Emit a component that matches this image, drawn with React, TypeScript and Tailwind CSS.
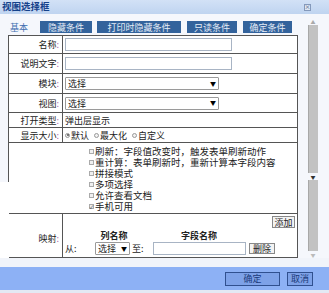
import { ReactNode } from 'react'

const FONT = "font-['Noto_Sans_CJK_SC',sans-serif]"

function Label({ children }: { children: ReactNode }) {
  return (
    <div className="w-[54px] shrink-0 border-r border-[#555] flex items-center justify-end pr-[3px]">
      {children}<span className="text-[#b070b0]">:</span>
    </div>
  )
}

function Row({ h, label, children }: { h: string; label: string; children?: ReactNode }) {
  return (
    <div className={`flex ${h} border-b border-r border-[#555]`}>
      <Label>{label}</Label>
      <div className="flex-1 flex items-center pl-[2px]">{children}</div>
    </div>
  )
}

function TextBox({ w }: { w: string }) {
  return <div className={`${w} h-[13px] border border-[#a8b4c4] bg-white`} />
}

function Select({ w }: { w: string }) {
  return (
    <div className={`${w} h-[13px] border border-[#9a9a9a] rounded-[1px] bg-white flex items-center justify-between px-[2px]`}>
      <span>选择</span>
      <span className="text-[6px] text-black">▼</span>
    </div>
  )
}

function Radio({ on, text }: { on?: boolean; text: string }) {
  return (
    <div className="flex items-center gap-[1px] mr-[5px]">
      <span className="w-[5px] h-[5px] rounded-full border border-[#999] bg-[#f2f2f2] flex items-center justify-center">
        {on && <span className="w-[2px] h-[2px] rounded-full bg-[#555]" />}
      </span>
      <span>{text}</span>
    </div>
  )
}

function Check({ on, text }: { on?: boolean; text: string }) {
  return (
    <div className="flex items-center h-[11px] gap-[1px] text-[9.5px] leading-[11px]">
      <span className="w-[5px] h-[5px] border border-[#aaa] bg-[#f0f0f0] flex items-center justify-center text-[5px] leading-none">
        {on ? '✓' : ''}
      </span>
      <span>{text}</span>
    </div>
  )
}

const TABS = [
  { t: '隐藏条件', w: 'w-[52px]', ml: 'ml-0' },
  { t: '打印时隐藏条件', w: 'w-[84px]', ml: 'ml-[5px]' },
  { t: '只读条件', w: 'w-[50px]', ml: 'ml-[6px]' },
  { t: '确定条件', w: 'w-[49px]', ml: 'ml-[6px]' },
]

export default function App() {
  return (
    <div className={`w-[329px] h-[293px] overflow-hidden flex flex-col bg-[#f5f7fc] text-[9px] leading-none text-[#222] ${FONT}`}>
      {/* title */}
      <div className="h-[14px] shrink-0 flex items-center justify-between pl-[2px] pr-[18px] bg-gradient-to-b from-[#d2e1f6] to-[#bfd4f0]">
        <span className="font-bold text-[#15428b] text-[9.5px]">视图选择框</span>
        <span className="w-[7px] h-[7px] border border-[#8499bb] bg-[#dde6f3] flex items-center justify-center text-[6px] text-[#3d5478]">×</span>
      </div>

      <div className="flex h-[244px] shrink-0">
        {/* left gutter */}
        <div className="w-[9px] shrink-0 flex flex-col bg-white">
          <div className="h-[21px] bg-[#f5f7fc]" />
          <div className="h-[147px] bg-[#f5f7fc] border-r border-[#555]" />
        </div>

        {/* form */}
        <div className="w-[289px] shrink-0 flex flex-col">
          <div className="h-[21px] pt-[7px] flex">
            <span className="w-[31px] h-[12px] flex items-center pl-[1px] text-[#3f6fb0]">基本</span>
            {TABS.map(t => (
              <span key={t.t} className={`${t.w} ${t.ml} h-[12px] bg-[#33639c] text-[#e6edf7] flex items-center justify-center`}>{t.t}</span>
            ))}
          </div>

          <div className="border-t border-[#555] bg-white flex flex-col">
            <Row h="h-[18px]" label="名称"><TextBox w="w-[167px]" /></Row>
            <Row h="h-[20px]" label="说明文字"><TextBox w="w-[167px]" /></Row>
            <Row h="h-[20px]" label="模块"><Select w="w-[154px]" /></Row>
            <Row h="h-[19px]" label="视图"><Select w="w-[154px]" /></Row>
            <Row h="h-[15px]" label="打开类型"><span>弹出层显示</span></Row>
            <Row h="h-[15px]" label="显示大小">
              <Radio on text="默认" />
              <Radio text="最大化" />
              <Radio text="自定义" />
            </Row>

            {/* options */}
            <div className="h-[71px] border-b border-r border-[#555] pl-[80px] pt-[3px] flex flex-col">
              <Check text="刷新：字段值改变时，触发表单刷新动作" />
              <Check text="重计算：表单刷新时，重新计算本字段内容" />
              <Check text="拼接模式" />
              <Check text="多项选择" />
              <Check text="允许查看文档" />
              <Check on text="手机可用" />
            </div>

            {/* mapping */}
            <div className="flex h-[44px] border-b border-r border-[#555]">
              <div className="w-[54px] shrink-0 border-r border-[#555] flex justify-end pr-[3px] pt-[20px]">
                映射<span className="text-[#b070b0]">:</span>
              </div>
              <div className="flex-1 flex flex-col">
                <div className="flex justify-end pt-[2px] pr-[2px]">
                  <span className="w-[23px] h-[12px] border border-[#888] bg-[#f3f3f3] flex items-center justify-center">添加</span>
                </div>
                <div className="flex font-bold mt-[3px] ml-[17px]">
                  <span className="w-[68px] text-center">列名称</span>
                  <span className="w-[102px] text-center">字段名称</span>
                </div>
                <div className="flex items-center mt-[2px] ml-[2px]">
                  <span className="w-[30px]">从:</span>
                  <Select w="w-[35px]" />
                  <span className="ml-[2px] w-[21px]">至:</span>
                  <TextBox w="w-[93px]" />
                  <span className="ml-[3px] w-[26px] h-[11px] border border-[#888] bg-[#f3f3f3] flex items-center justify-center">删除</span>
                </div>
              </div>
            </div>
          </div>
        </div>

        {/* scrollbar */}
        <div className="flex-1 pl-[10px]">
          <div className="w-[10px] flex flex-col pt-[3px]">
            <div className="h-[8px] flex items-center justify-center text-[5px] text-[#aaa]">▲</div>
            <div className="h-[148px] bg-[#c2c2c2] border-l border-[#a8a8a8]" />
            <div className="h-[7px] flex items-center justify-center text-[5px] text-[#333]">▼</div>
            <div className="h-[71px] bg-[#c2c2c2] border-l border-[#a8a8a8]" />
            <div className="h-[6px] flex items-center justify-center text-[5px] text-[#bbb]">▼</div>
          </div>
        </div>
      </div>

      {/* footer */}
      <div className="h-[9px] shrink-0 bg-[#f1f4fa]" />
      <div className="h-[23px] shrink-0 bg-[#8db1f5] flex items-center justify-end pr-[16px]">
        <span className="w-[55px] h-[14px] border border-[#30508f] bg-[#7ea2e8] text-[#1a3a7a] flex items-center justify-center">确定</span>
        <span className="ml-[7px] w-[26px] h-[14px] border border-[#30508f] bg-[#7ea2e8] text-[#1a3a7a] flex items-center justify-center">取消</span>
      </div>
      <div className="flex-1 bg-[#e3e9f4]" />
    </div>
  )
}
